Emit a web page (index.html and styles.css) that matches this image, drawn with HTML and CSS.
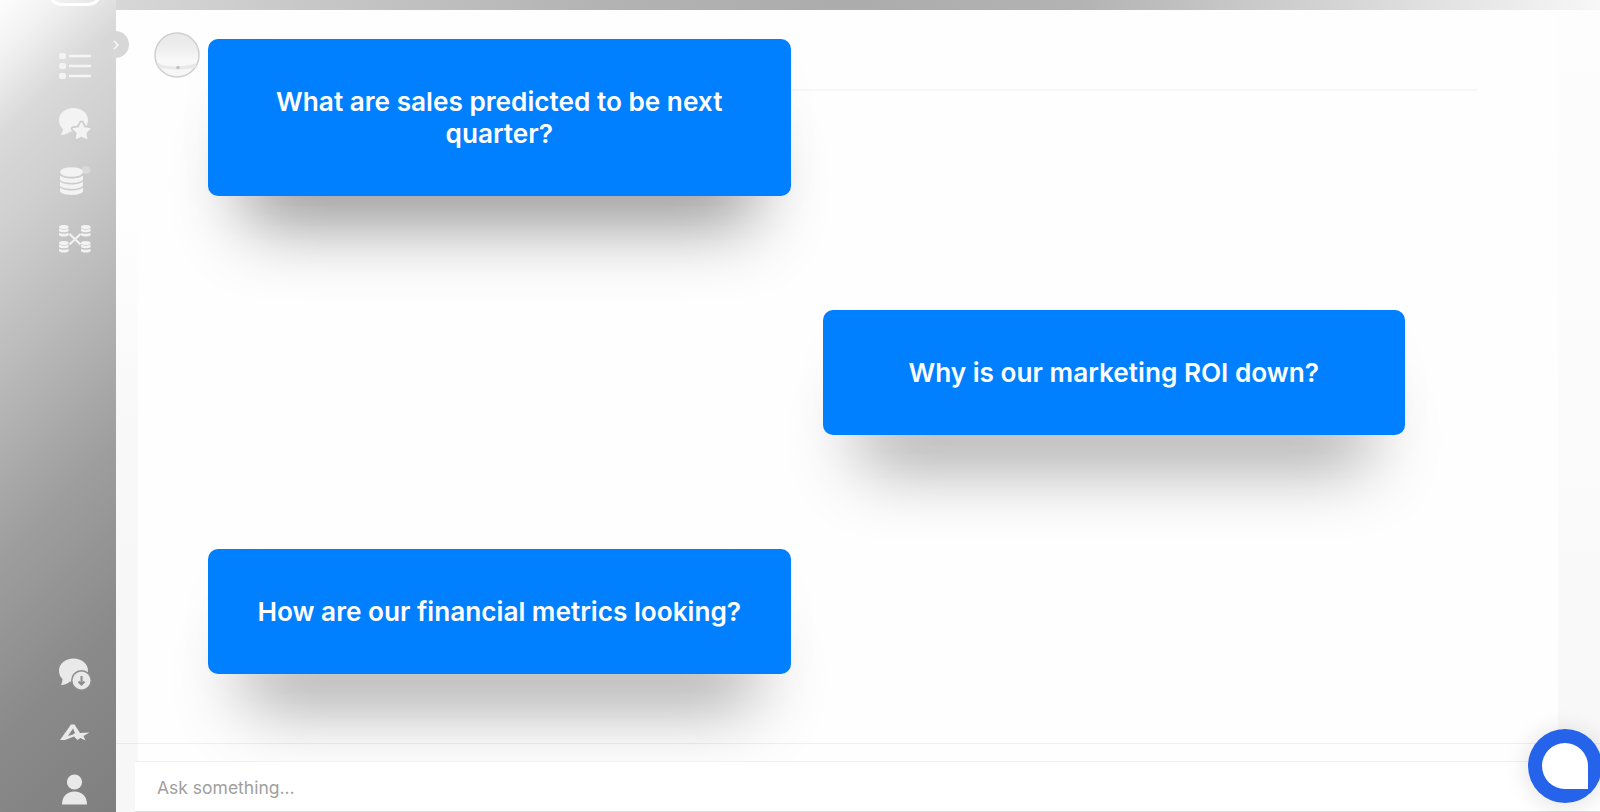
FILE: index.html
```html
<!DOCTYPE html>
<html lang="en">
<head>
	<meta charset="utf-8">
	<title>Ask something</title>
	<link rel="stylesheet" href="styles.css">
</head>
<body>
<div class="app">
	<div class="sidebar">
		<div class="logo"></div>
		<div class="nav">
			<svg class="icon" viewBox="0 0 32 32">
				<rect x="0" y="3" width="7" height="6" rx="2"/><rect x="0" y="13" width="7" height="6" rx="2"/><rect x="0" y="23" width="7" height="6" rx="2"/>
				<path d="M11 6h20M11 16h20M11 26h20" fill="none" stroke="#f5f5f5" stroke-width="2.400" stroke-linecap="round"/>
			</svg>
			<svg class="icon" viewBox="0 0 32 32">
				<path d="M14.500 0C6.500 0 0 5.200 0 12c0 4 1.500 7 4 9-.2 2-1 4-2.500 6 4.500 0 7-1.500 9.500-3.500 10 1.500 18-3.500 18-11.500C29 5 22.500 0 14.500 0z"/>
				<path class="star-gap" d="M22.500 15l2.600 5 5.600.8-4 4 .9 5.500-5.100-2.500-5.100 2.500.9-5.500-4-4 5.600-.8z"/>
				<path class="star" d="M22.500 15l2.600 5 5.600.8-4 4 .9 5.500-5.100-2.500-5.100 2.500.9-5.500-4-4 5.600-.8z"/>
			</svg>
			<svg class="icon" viewBox="0 0 32 32">
				<ellipse cx="27" cy="4" rx="4.500" ry="3.800" opacity=".35"/>
				<ellipse cx="12.500" cy="6" rx="11.500" ry="4.800"/>
				<path d="M1 9.500c4 4 19 4 23 0v4c-2 4.500-21 4.500-23 0zM1 15.500c4 4 19 4 23 0v4c-2 4.500-21 4.500-23 0zM1 21.500c4 4 19 4 23 0v4c-2 4.500-21 4.500-23 0z"/>
			</svg>
			<svg class="icon" viewBox="0 0 32 32">
				<defs>
					<g id="db"><ellipse cx="4.800" cy="2" rx="4.800" ry="2"/><path d="M0 3.500c2 1.500 7.600 1.500 9.600 0v2.500c-1.500 1.800-8.100 1.800-9.600 0zM0 7.700c2 1.500 7.600 1.500 9.600 0v2.500c-1.500 1.800-8.100 1.800-9.600 0z"/></g>
				</defs>
				<use href="#db" x="0" y="1"/><use href="#db" x="22" y="1"/><use href="#db" x="0" y="17"/><use href="#db" x="22" y="17"/>
				<path d="M10.500 10l11 10.500M21.500 10l-11 10.500" fill="none" stroke="#f2f2f2" stroke-width="2.200"/>
			</svg>
		</div>
		<div class="nav nav-bottom">
			<svg class="icon" viewBox="0 -2 32 32">
				<path d="M14.500 -.5C6.500 -.5 0 4.700 0 11.500c0 4 1.500 7 3.500 8.500 0 2-.5 4-1.500 6 4 0 6.500-1.500 9-3.500 10 1.500 18-3.500 18-11C29 4.500 22.500 -.5 14.500 -.5z"/>
				<circle class="badge" cx="22.500" cy="21.500" r="9"/>
				<path class="arrow" d="M22.500 17v8.500M19.500 22.500l3 3 3-3"/>
			</svg>
			<svg class="icon" viewBox="0 -1 32 32">
				<path fill-rule="evenodd" d="M1 24L12 8.500h3.500L21 17l9.500-.5-6 3.500 2 4.500-5-2.500-3 2-3.500-3.500L6 24zM9 20l5-1.500 2-1.500-2-4.500z"/>
			</svg>
			<svg class="icon" viewBox="0 0 32 32">
				<circle cx="15.500" cy="9" r="7.600"/>
				<path d="M3 31.500c0-8 5-13 12.500-13S28 23.500 28 31.500z"/>
			</svg>
		</div>
	</div>

	<div class="panel">
		<div class="toggle">
			<svg viewBox="0 0 8 12"><path d="M2 2l4 4-4 4" fill="none" stroke="#f8f8f8" stroke-width="1.500"/></svg>
		</div>
		<div class="header">
			<svg class="avatar" viewBox="0 0 46 46">
				<defs>
					<linearGradient id="sky" x1="0" y1="0" x2="0" y2="1">
						<stop offset="0" stop-color="#e8e8e8"/><stop offset=".35" stop-color="#eee"/><stop offset=".6" stop-color="#f8f8f8"/><stop offset="1" stop-color="#f6f6f6"/>
					</linearGradient>
				</defs>
				<circle cx="23" cy="23" r="22" fill="url(#sky)" stroke="#cfcfcf" stroke-width="1.500"/>
				<path d="M2.500 30c6 4 13 5 20 4.500s14-1 20.500-3.500l-2 5c-10 2-26 2-36-.5z" fill="#e8e8e8"/>
				<circle cx="24" cy="35.500" r="1.700" fill="#c0c0c0"/>
			</svg>
		</div>
		<div class="chat">
			<div class="card">What are sales predicted to be next quarter?</div>
			<div class="card right">Why is our marketing ROI down?</div>
			<div class="card last">How are our financial metrics looking?</div>
		</div>
		<div class="divider"></div>
		<div class="ask">Ask something...</div>
	</div>
</div>

<div class="chat-button">
	<div class="bubble"></div>
</div>
</body>
</html>
```

FILE: styles.css
```css
* {
	box-sizing: border-box;
}

body {
	margin: 0;
	height: 812px;
	overflow: hidden;
	font-family: Inter, sans-serif;
}

.app {
	display: flex;
	height: 812px;
	padding-top: 10px;
	background: linear-gradient(90deg, #fbfbfb 0, #d7d7d7 116px, #c8c8c8 300px, #b3b3b3 600px, #acacac 850px, #b3b3b3 1080px, #d2d2d2 1320px, #f7f7f7 1600px);
}

/* sidebar */
.sidebar {
	display: flex;
	flex-direction: column;
	width: 116px;
	margin-top: -10px;
	padding-left: 59px;
	background: linear-gradient(135deg, #fdfdfd 0, #f2f2f2 6%, #d9d9d9 15%, #cecece 26%, #b8b8b8 42%, #9e9e9e 60%, #8a8a8a 80%, #7f7f7f 100%);
}

.logo {
	flex: none;
	width: 54px;
	height: 46px;
	margin: -40px 0 0 -11px;
	border: 3px solid #fff;
	border-radius: 14px;
}

.nav {
	display: flex;
	flex-direction: column;
	gap: 26px;
	margin-top: 44px;
}

.nav-bottom {
	margin-top: auto;
	margin-bottom: 7px;
}

.icon {
	display: block;
	width: 32px;
	height: 32px;
	overflow: visible;
	fill: #f3f3f3;
}

.nav-bottom .icon {
	fill: #e9e9e9;
}

.icon .star-gap {
	stroke: #cecece;
	stroke-width: 5;
	stroke-linejoin: round;
}

.icon .star {
	stroke: #f3f3f3;
	stroke-width: 1.500;
	stroke-linejoin: round;
}

.icon .badge {
	stroke: #8d8d8d;
	stroke-width: 3;
	paint-order: stroke;
}

.icon .arrow {
	fill: none;
	stroke: #8d8d8d;
	stroke-width: 2;
}

/* main panel */
.panel {
	position: relative;
	display: flex;
	flex: 1;
	flex-direction: column;
	background:
		linear-gradient(#fefefe 200px, #f8f8f8 420px, #f7f7f7) 0 0 / 22px 100% no-repeat,
		linear-gradient(#fdfdfd, #fbfbfb 400px, #f7f7f7) 1442px 0 / 42px 100% no-repeat,
		#fefefe;
}

.toggle {
	position: absolute;
	top: 21px;
	left: -14px;
	display: flex;
	align-items: center;
	justify-content: center;
	width: 27px;
	height: 27px;
	border-radius: 50%;
	background: #d7d7d7;
}

.toggle svg {
	width: 8px;
	height: 12px;
}

.header {
	height: 81px;
	margin-right: 122px;
	margin-left: 92px;
	padding-top: 22px;
	border-bottom: 2px solid #f7f7f7;
}

.avatar {
	display: block;
	width: 46px;
	height: 46px;
	margin-left: -54px;
}

.chat {
	display: grid;
	flex: 1;
	grid-template-columns: 582.500px 582.500px;
	align-content: start;
	gap: 113.500px 32px;
	margin-top: -52px;
	padding-left: 92px;
}

.card {
	grid-column: 1;
	padding: 47px;
	border-radius: 10px;
	background: #0080ff;
	box-shadow: 0 66px 70px -38px rgba(0, 0, 0, .41), 0 20px 60px -10px rgba(0, 0, 0, .03);
	color: #fff;
	font-size: 26.200px;
	font-weight: 600;
	line-height: 31.500px;
	text-align: center;
}

.right {
	grid-row: 2;
	grid-column: 2;
}

.last {
	grid-row: 3;
}

.divider {
	height: 18px;
	border-top: 1px solid rgba(0, 0, 0, .06);
}

.ask {
	height: 51px;
	margin-left: 19px;
	padding: 15px 22px;
	border-top: 1px solid #f0f0f0;
	border-bottom: 1px solid #ddd;
	background: #fff;
	color: #a0a0a0;
	font-size: 17.500px;
	line-height: 22px;
}

/* floating chat launcher */
.chat-button {
	position: absolute;
	top: 729px;
	left: 1528px;
	display: flex;
	align-items: center;
	justify-content: center;
	width: 74px;
	height: 74px;
	border-radius: 50%;
	background: #2563eb;
	box-shadow: 0 2px 24px rgba(0, 0, 0, .13);
}

.bubble {
	width: 46px;
	height: 46px;
	border-radius: 50% 50% 0 50%;
	background: #fff;
}
```
